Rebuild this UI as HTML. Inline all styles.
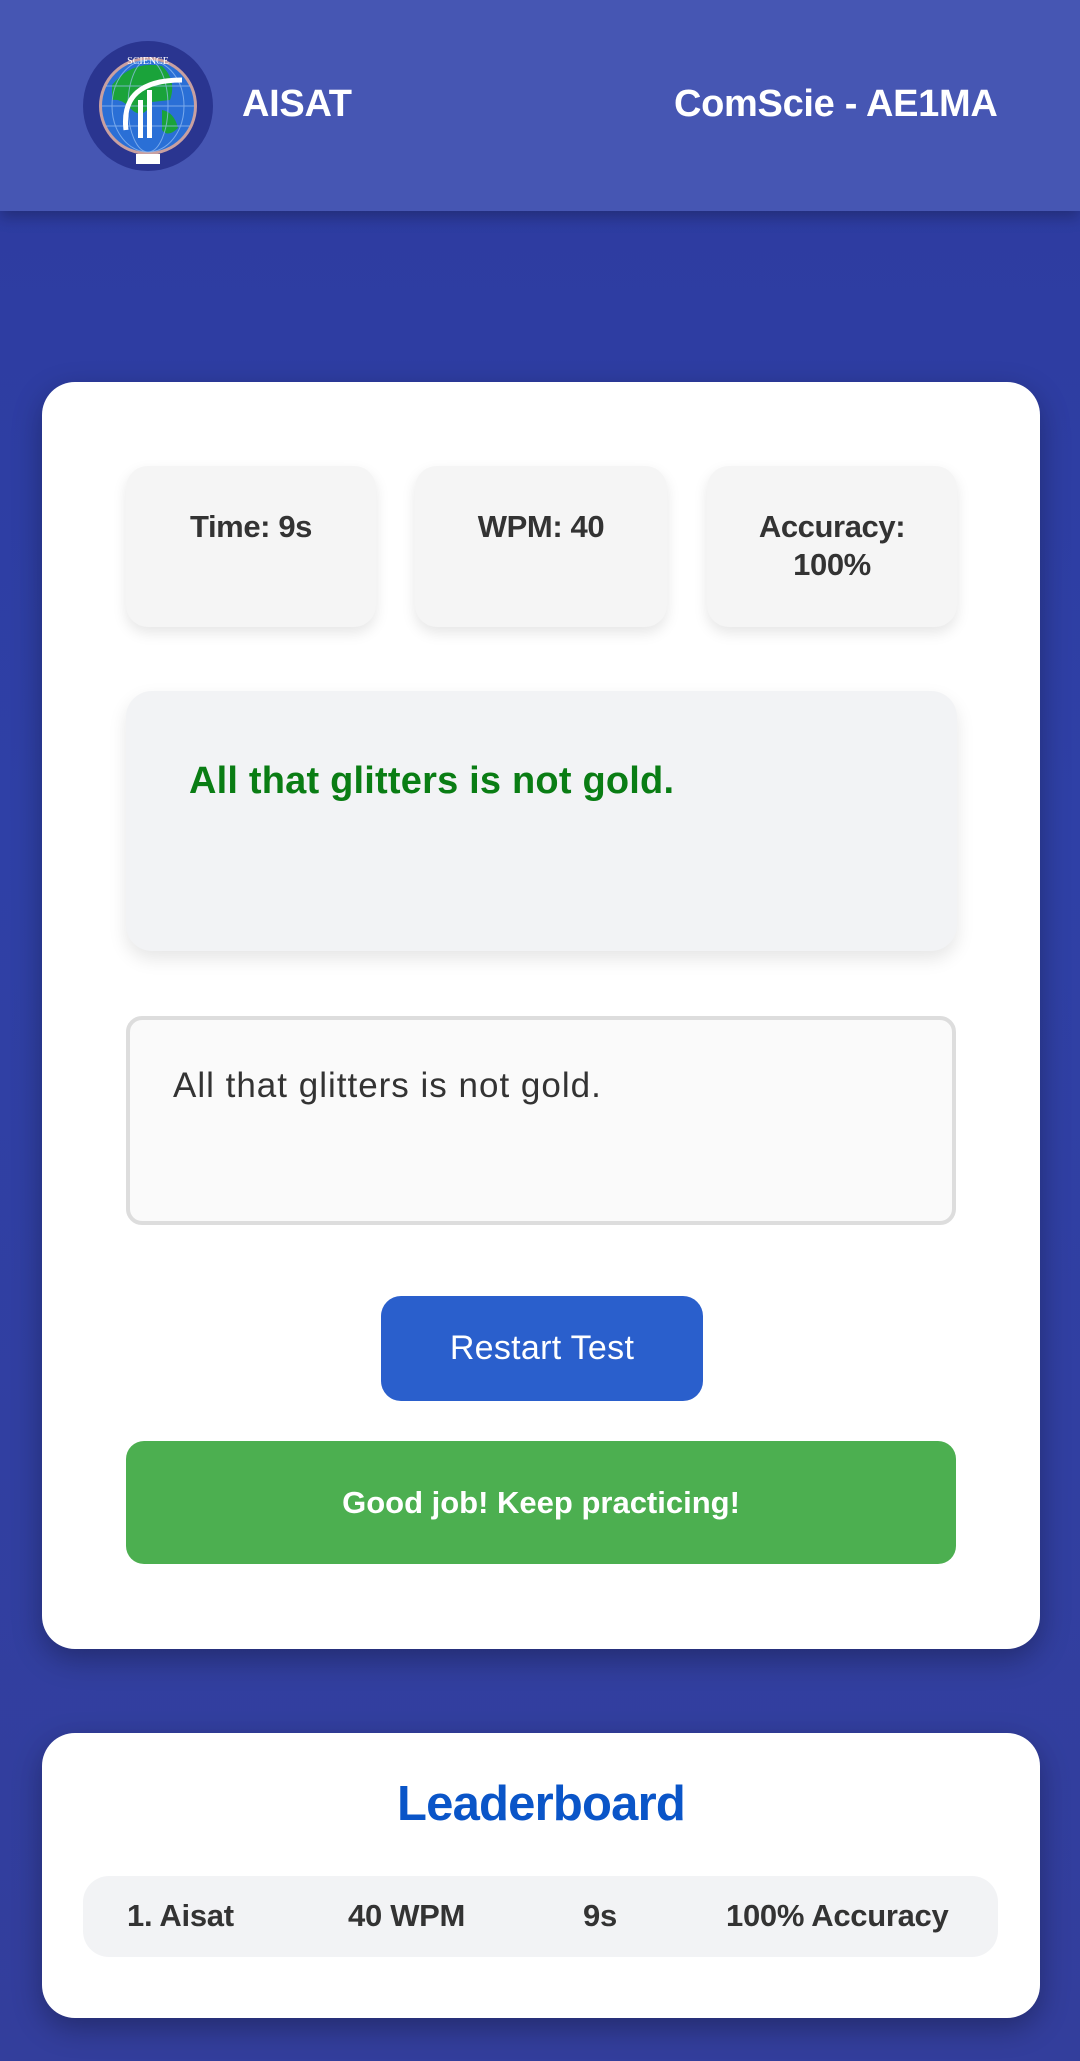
<!DOCTYPE html>
<html><head><meta charset="utf-8"><style>
*{margin:0;padding:0;box-sizing:border-box}
body{width:1080px;height:2061px;overflow:hidden;background:linear-gradient(180deg,#2d3b9f 0%,#2f40a6 40%,#333e9c 100%);font-family:"Liberation Sans",sans-serif;position:relative}
.a{position:absolute}
.hdr{left:0;top:0;width:1080px;height:211px;background:#4656b3;box-shadow:0 6px 14px rgba(0,0,0,.25)}
.ht{color:#fff;font-weight:bold;font-size:38px;line-height:1;letter-spacing:-0.3px}
.card{background:#fff;border-radius:33px;box-shadow:0 10px 30px rgba(0,0,0,.3)}
.stat{background:#f5f5f5;border-radius:22px;box-shadow:0 6px 14px rgba(0,0,0,.1);color:#333;font-weight:bold;font-size:31px;text-align:center;line-height:38px;padding-top:42px;letter-spacing:-0.4px}
.lb{color:#333;font-weight:bold;font-size:31px;line-height:1;letter-spacing:-0.3px}
</style></head><body>
<div class="a hdr"></div>
<svg class="a" style="left:82px;top:40px" width="132" height="132" viewBox="0 0 132 132">
<circle cx="66" cy="66" r="65" fill="#2a3590"/>
<circle cx="66" cy="66" r="49" fill="#c9a0a0"/>
<circle cx="66" cy="66" r="46" fill="#2a6fd6"/>
<path d="M30 45 Q50 20 80 26 Q95 40 88 60 L70 62 Q62 80 50 70 Q40 58 30 60Z" fill="#1aa33a"/>
<path d="M80 70 Q92 72 96 88 Q86 98 80 90Z" fill="#1aa33a"/>
<g stroke="#9cc3f5" stroke-width="1" fill="none" opacity=".7"><ellipse cx="66" cy="66" rx="20" ry="46"/><ellipse cx="66" cy="66" rx="36" ry="46"/><line x1="20" y1="66" x2="112" y2="66"/><line x1="24" y1="46" x2="108" y2="46"/><line x1="24" y1="86" x2="108" y2="86"/></g>
<path d="M44 90 Q38 40 100 40" stroke="#fff" stroke-width="5" fill="none"/>
<rect x="56" y="60" width="5" height="38" fill="#fff"/><rect x="65" y="50" width="5" height="48" fill="#fff"/>
<rect x="54" y="114" width="24" height="10" fill="#fff"/>
<text x="66" y="24" font-size="10" fill="#fff" text-anchor="middle" font-family="Liberation Serif">SCIENCE</text>
</svg>
<div class="a ht" style="left:242px;top:85px">AISAT</div>
<div class="a ht" style="left:674px;top:85px">ComScie - AE1MA</div>

<div class="a card" style="left:42px;top:382px;width:998px;height:1267px"></div>
<div class="a stat" style="left:126px;top:466px;width:250px;height:161px">Time: 9s</div>
<div class="a stat" style="left:415px;top:466px;width:252px;height:161px">WPM: 40</div>
<div class="a stat" style="left:707px;top:466px;width:250px;height:161px">Accuracy:<br>100%</div>
<div class="a" style="left:126px;top:691px;width:831px;height:260px;background:#f2f3f5;border-radius:26px;box-shadow:0 8px 18px rgba(0,0,0,.1)"></div>
<div class="a" style="left:189px;top:762px;color:#0a7d14;font-weight:bold;font-size:38px;letter-spacing:0.2px;line-height:1">All that glitters is not gold.</div>
<div class="a" style="left:126px;top:1016px;width:830px;height:209px;background:#fafafa;border:4px solid #ddd;border-radius:16px"></div>
<div class="a" style="left:173px;top:1068px;color:#333;font-size:35px;letter-spacing:1px;line-height:1">All that glitters is not gold.</div>
<div class="a" style="left:381px;top:1296px;width:322px;height:105px;background:#2a5fcc;border-radius:20px;color:#fff;font-size:34px;text-align:center;line-height:105px;letter-spacing:0.3px">Restart Test</div>
<div class="a" style="left:126px;top:1441px;width:830px;height:123px;background:#4caf50;border-radius:18px;color:#fff;font-weight:bold;font-size:31px;text-align:center;line-height:123px;letter-spacing:0">Good job! Keep practicing!</div>

<div class="a card" style="left:42px;top:1733px;width:998px;height:285px"></div>
<div class="a" style="left:42px;top:1780px;width:998px;text-align:center;color:#0a55c8;font-weight:bold;font-size:49px;line-height:1;letter-spacing:-0.8px">Leaderboard</div>
<div class="a" style="left:83px;top:1876px;width:915px;height:81px;background:#f2f3f5;border-radius:26px"></div>
<div class="a lb" style="left:127px;top:1900px">1. Aisat</div>
<div class="a lb" style="left:348px;top:1900px">40 WPM</div>
<div class="a lb" style="left:583px;top:1900px">9s</div>
<div class="a lb" style="left:726px;top:1900px">100% Accuracy</div>
</body></html>
